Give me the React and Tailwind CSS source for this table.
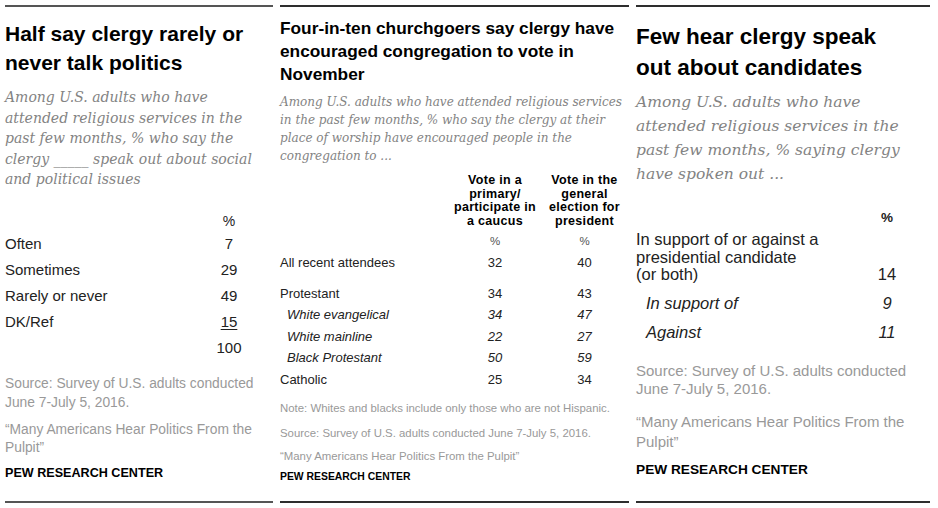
import React from "react";

const sans = { fontFamily: '"Liberation Sans", Arial, sans-serif' };
const serif = { fontFamily: '"DejaVu Serif", Georgia, serif' };

function Row({ label, value, labelW, numW, className = "", italic = false, underline = false }) {
  return (
    <div className={`flex ${className}`}>
      <div className={`${labelW} whitespace-nowrap ${italic ? "italic" : ""}`}>{label}</div>
      <div className={`${numW} text-center ${italic ? "italic" : ""} ${underline ? "underline underline-offset-2" : ""}`}>{value}</div>
    </div>
  );
}

function LeftPanel() {
  return (
    <div className="w-[268px] h-[498px] border-t-2 border-b-2 border-[#555] flex flex-col" style={sans}>
      <div className="mt-[12px] text-[21px] leading-[29px] font-bold text-black whitespace-nowrap">
        Half say clergy rarely or<br />never talk politics
      </div>
      <div className="mt-[10px] text-[14px] leading-[20.5px] italic text-[#838383] whitespace-nowrap" style={serif}>
        Among U.S. adults who have<br />
        attended religious services in the<br />
        past few months, % who say the<br />
        clergy _____ speak out about social<br />
        and political issues
      </div>
      <div className="mt-[21px] text-[15px] text-[#222]">
        <Row label="" value="%" labelW="w-[204px]" numW="w-[40px]" className="leading-[20px] text-[14px]" />
        <Row label="Often" value="7" labelW="w-[204px]" numW="w-[40px]" className="leading-[26px]" />
        <Row label="Sometimes" value="29" labelW="w-[204px]" numW="w-[40px]" className="leading-[26px]" />
        <Row label="Rarely or never" value="49" labelW="w-[204px]" numW="w-[40px]" className="leading-[26px]" />
        <Row label="DK/Ref" value="15" underline labelW="w-[204px]" numW="w-[40px]" className="leading-[26px]" />
        <Row label="" value="100" labelW="w-[204px]" numW="w-[40px]" className="leading-[26px]" />
      </div>
      <div className="mt-[13.5px] text-[13.8px] leading-[19px] text-[#999] whitespace-nowrap">
        Source: Survey of U.S. adults conducted<br />June 7-July 5, 2016.
      </div>
      <div className="mt-[8.5px] text-[13.8px] leading-[18px] text-[#999] whitespace-nowrap">
        “Many Americans Hear Politics From the<br />Pulpit”
      </div>
      <div className="mt-[7px] text-[12.6px] leading-[18px] font-bold text-black">PEW RESEARCH CENTER</div>
    </div>
  );
}

function MidRow({ label, a, b, italic = false, className = "" }) {
  return (
    <div className={`flex ${className} ${italic ? "italic" : ""}`}>
      <div className={`w-[170px] whitespace-nowrap ${italic ? "pl-[7px]" : ""}`}>{label}</div>
      <div className="w-[90px] text-center">{a}</div>
      <div className="w-[89px] text-center">{b}</div>
    </div>
  );
}

function MiddlePanel() {
  return (
    <div className="w-[349px] h-[498px] border-t-2 border-b-2 border-[#2e2e2e] flex flex-col" style={sans}>
      <div className="mt-[9.5px] text-[17.3px] leading-[23px] font-bold text-black whitespace-nowrap">
        Four-in-ten churchgoers say clergy have<br />encouraged congregation to vote in<br />November
      </div>
      <div className="mt-[7.5px] text-[12px] leading-[18px] italic text-[#838383] whitespace-nowrap" style={serif}>
        Among U.S. adults who have attended religious services<br />
        in the past few months, % who say the clergy at their<br />
        place of worship have encouraged people in the<br />
        congregation to ...
      </div>
      <div className="mt-[9px] flex text-[12.5px] leading-[13.67px] font-bold text-black tracking-[0.3px]">
        <div className="w-[170px]" />
        <div className="w-[90px] text-center whitespace-nowrap">Vote in a<br />primary/<br />participate in<br />a caucus</div>
        <div className="w-[89px] text-center whitespace-nowrap">Vote in the<br />general<br />election for<br />president</div>
      </div>
      <div className="text-[13px] text-[#222]">
        <MidRow label="" a="%" b="%" className="mt-[4px] leading-[16px] text-[11.5px] text-[#555]" />
        <MidRow label="All recent attendees" a="32" b="40" className="mt-[3px] leading-[22px]" />
        <MidRow label="Protestant" a="34" b="43" className="mt-[9px] leading-[21.5px]" />
        <MidRow label="White evangelical" a="34" b="47" italic className="leading-[21.5px]" />
        <MidRow label="White mainline" a="22" b="27" italic className="leading-[21.5px]" />
        <MidRow label="Black Protestant" a="50" b="59" italic className="leading-[21.5px]" />
        <MidRow label="Catholic" a="25" b="34" className="leading-[21.5px]" />
      </div>
      <div className="mt-[10px] text-[11.4px] leading-[16px] text-[#999] whitespace-nowrap">
        Note: Whites and blacks include only those who are not Hispanic.
      </div>
      <div className="mt-[9px] text-[11.4px] leading-[16px] text-[#999] whitespace-nowrap">
        Source: Survey of U.S. adults conducted June 7-July 5, 2016.
      </div>
      <div className="mt-[7px] text-[11.4px] leading-[16px] text-[#999] whitespace-nowrap">
        “Many Americans Hear Politics From the Pulpit”
      </div>
      <div className="mt-[5px] text-[10.4px] leading-[16px] font-bold text-black">PEW RESEARCH CENTER</div>
    </div>
  );
}

function RightPanel() {
  return (
    <div className="w-[294px] h-[498px] border-t-2 border-b-2 border-[#2e2e2e] flex flex-col" style={sans}>
      <div className="mt-[13.5px] text-[22.5px] leading-[31px] font-bold text-black whitespace-nowrap">
        Few hear clergy speak<br />out about candidates
      </div>
      <div className="mt-[7.5px] text-[15.5px] leading-[24px] italic text-[#838383] whitespace-nowrap" style={serif}>
        Among U.S. adults who have<br />
        attended religious services in the<br />
        past few months, % saying clergy<br />
        have spoken out ...
      </div>
      <div className="text-[16.5px] text-[#222]">
        <div className="mt-[22px] flex leading-[20px]">
          <div className="w-[231px]" />
          <div className="w-[40px] text-center font-bold text-[13.5px]">%</div>
        </div>
        <div className="mt-[3px] flex items-end leading-[17.5px]">
          <div className="w-[231px] whitespace-nowrap">In support of or against a<br />presidential candidate<br />(or both)</div>
          <div className="w-[40px] text-center">14</div>
        </div>
        <div className="mt-[5px] flex italic leading-[29px]">
          <div className="w-[231px] pl-[10px]">In support of</div>
          <div className="w-[40px] text-center">9</div>
        </div>
        <div className="flex italic leading-[29px]">
          <div className="w-[231px] pl-[10px]">Against</div>
          <div className="w-[40px] text-center">11</div>
        </div>
      </div>
      <div className="mt-[15.5px] text-[15px] leading-[18px] text-[#999] whitespace-nowrap">
        Source: Survey of U.S. adults conducted<br />June 7-July 5, 2016.
      </div>
      <div className="mt-[14px] text-[15px] leading-[20px] text-[#999] whitespace-nowrap">
        “Many Americans Hear Politics From the<br />Pulpit”
      </div>
      <div className="mt-[9px] text-[13.7px] leading-[18px] font-bold text-black">PEW RESEARCH CENTER</div>
    </div>
  );
}

export default function App() {
  return (
    <div className="w-[938px] h-[508px] bg-white flex pt-[5px] pl-[5px] gap-[7px] overflow-hidden">
      <LeftPanel />
      <MiddlePanel />
      <RightPanel />
    </div>
  );
}
